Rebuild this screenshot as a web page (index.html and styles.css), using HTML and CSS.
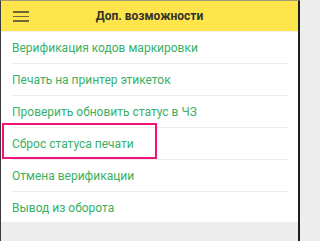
FILE: index.html
```html
<!DOCTYPE html>
<html lang="ru">
<head>
<meta charset="utf-8">
<title>Доп. возможности</title>
<link rel="stylesheet" href="styles.css">
</head>
<body>
<div class="screen">
  <header class="appbar">
    <span class="burger" aria-hidden="true"><i></i><i></i><i></i></span>
    <h1 class="title">Доп. возможности</h1>
  </header>
  <ul class="menu">
    <li class="item">Верификация кодов маркировки</li>
    <li class="item">Печать на принтер этикеток</li>
    <li class="item">Проверить обновить статус в ЧЗ</li>
    <li class="item">Сброс статуса печати</li>
    <li class="item">Отмена верификации</li>
    <li class="item">Вывод из оборота</li>
  </ul>
  <div class="highlight"></div>
</div>
</body>
</html>
```
FILE: styles.css
```css
html, body {
  margin: 0;
  padding: 0;
}
body {
  width: 300px;
  height: 241px;
  overflow: hidden;
  font-family: Roboto, "Noto Sans", sans-serif;
  background: #ededed;
}
.screen {
  position: relative;
  box-sizing: border-box;
  height: 241px;
  border-top: 1px solid #a39d73;
  border-left: 1px solid #3a3a3a;
  border-right: 2px solid #1e1e1e;
  background: #ededed;
}
.appbar {
  position: relative;
  height: 30px;
  background: #fde54b;
  display: flex;
  align-items: center;
  justify-content: center;
  border-bottom: 1px solid #f2f0e4;
}
.burger {
  position: absolute;
  left: 12px;
  top: 10px;
  width: 16px;
  display: flex;
  flex-direction: column;
  gap: 3px;
}
.burger i {
  display: block;
  height: 1.5px;
  background: #6e6738;
}
.title {
  margin: 0;
  font-size: 12px;
  font-weight: 700;
  color: #35332a;
  letter-spacing: 0;
}
.menu {
  list-style: none;
  margin: 0;
  padding: 0 10px 0 11px;
  background: #ffffff;
}
.item {
  height: 31px;
  line-height: 32px;
  font-size: 12px;
  color: #38b066;
  border-bottom: 1px solid #ececec;
  white-space: nowrap;
}
.item:last-child {
  border-bottom: none;
  height: 30px;
}
.highlight {
  position: absolute;
  left: 1px;
  top: 122px;
  width: 151px;
  height: 32px;
  border: 2.5px solid #f2127b;
}
```
